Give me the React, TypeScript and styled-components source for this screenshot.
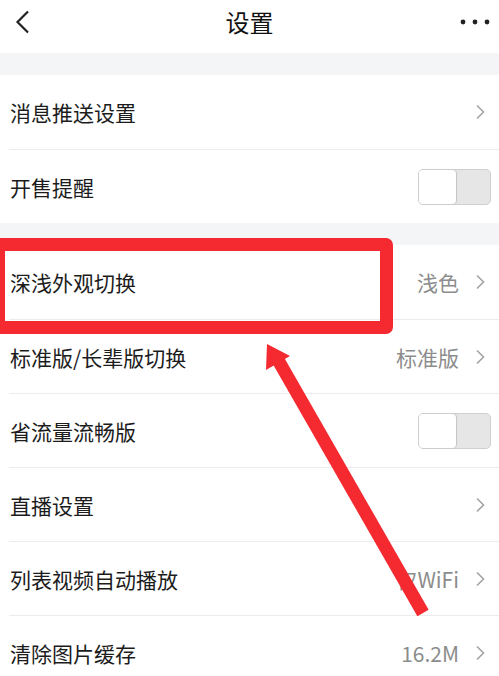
import {createGlobalStyle} from "styled-components";
import styled from "styled-components";

const GlobalStyle = createGlobalStyle`
  html, body {
    margin: 0;
    padding: 0;
    background: #fff;
  }
  body {
    font-family: "Noto Sans CJK SC", "Noto Sans", sans-serif;
    color: #1f1f1f;
  }
`

const Page = styled.div`
  position: relative;
  width: 499px;
  height: 676px;
  overflow: hidden;
  background: #fff;
`

const NavBar = styled.div`
  height: 44px;
  padding-bottom: 9px;
  display: grid;
  grid-template-columns: 60px 1fr 60px;
  align-items: center;
`

const NavTitle = styled.div`
  text-align: center;
  font-size: 24px;
  line-height: 44px;
  color: #111;
`

const NavButton = styled.div<{ $align: "start" | "end" }>`
  display: flex;
  justify-content: ${p => p.$align === "start" ? "flex-start" : "flex-end"};
  align-items: center;
  padding: ${p => p.$align === "start" ? "0 0 0 15px" : "0 8px 0 0"};
  height: 44px;
`

const Gap = styled.div`
  height: 22px;
  background: #f3f5f6;
`

const Group = styled.div`
  background: #fff;
  padding-left: 9px;
`

const Row = styled.div`
  height: 74px;
  display: flex;
  align-items: center;
  padding-right: 8px;
  box-sizing: border-box;
  & + & {
    border-top: 1px solid #ececec;
  }
`

const Label = styled.div`
  flex: 1;
  font-size: 21px;
  color: #1c1c1c;
  padding-left: 1px;
`

const Value = styled.div`
  font-size: 21px;
  color: #8c8c8c;
  margin-right: 16px;
`

const Switch = styled.div`
  width: 73px;
  height: 36px;
  box-sizing: border-box;
  border: 1.5px solid #cfcfcf;
  border-radius: 5px;
  background: #e6e6e6;
  display: flex;
`

const Knob = styled.div`
  width: 37px;
  height: 100%;
  background: #fff;
  border-radius: 4px;
  box-shadow: 1px 0 1px rgba(0, 0, 0, 0.15);
`

const ChevronIcon = styled.svg`
  margin-right: 6px;
`

const Highlight = styled.div`
  position: absolute;
  left: -8px;
  top: 238px;
  width: 401px;
  height: 96px;
  box-sizing: border-box;
  border: 13px solid #f52a31;
  border-radius: 7px;
  pointer-events: none;
`

const Overlay = styled.svg`
  position: absolute;
  left: 0;
  top: 0;
  pointer-events: none;
`

function Chevron() {
    return (
        <ChevronIcon width="10" height="16" viewBox="0 0 10 16">
            <path d="M2 1.5 L8.5 8 L2 14.5" fill="none" stroke="#a3a3a3" strokeWidth="1.6"/>
        </ChevronIcon>
    )
}

function Toggle() {
    return (
        <Switch>
            <Knob/>
        </Switch>
    )
}

type Item = { label: string, value?: string, toggle?: boolean }

const groupOne: Item[] = [
    {label: "消息推送设置"},
    {label: "开售提醒", toggle: true},
]

const groupTwo: Item[] = [
    {label: "深浅外观切换", value: "浅色"},
    {label: "标准版/长辈版切换", value: "标准版"},
    {label: "省流量流畅版", toggle: true},
    {label: "直播设置"},
    {label: "列表视频自动播放", value: "仅WiFi"},
    {label: "清除图片缓存", value: "16.2M"},
]

function SettingRow({item}: { item: Item }) {
    return (
        <Row>
            <Label>{item.label}</Label>
            {item.value && <Value>{item.value}</Value>}
            {item.toggle ? <Toggle/> : <Chevron/>}
        </Row>
    )
}

export default function App() {
    return (
        <Page>
            <GlobalStyle/>
            <NavBar>
                <NavButton $align="start">
                    <svg width="16" height="24" viewBox="0 0 16 24">
                        <path d="M13 1.5 L2.5 12 L13 22.5" fill="none" stroke="#222" strokeWidth="2.2"/>
                    </svg>
                </NavButton>
                <NavTitle>设置</NavTitle>
                <NavButton $align="end">
                    <svg width="32" height="8" viewBox="0 0 32 8">
                        <circle cx="4" cy="4" r="2.4" fill="#222"/>
                        <circle cx="16" cy="4" r="2.4" fill="#222"/>
                        <circle cx="28" cy="4" r="2.4" fill="#222"/>
                    </svg>
                </NavButton>
            </NavBar>
            <Gap/>
            <Group>
                {groupOne.map(item => <SettingRow key={item.label} item={item}/>)}
            </Group>
            <Gap/>
            <Group>
                {groupTwo.map(item => <SettingRow key={item.label} item={item}/>)}
            </Group>

            {/* annotation drawn over the screenshot */}
            <Highlight/>
            <Overlay width="499" height="676" viewBox="0 0 499 676">
                <line x1="278" y1="360" x2="423" y2="613" stroke="#f52a31" strokeWidth="13"/>
                <polygon points="267,344 266,370 290,356" fill="#f52a31"/>
            </Overlay>
        </Page>
    );
}
